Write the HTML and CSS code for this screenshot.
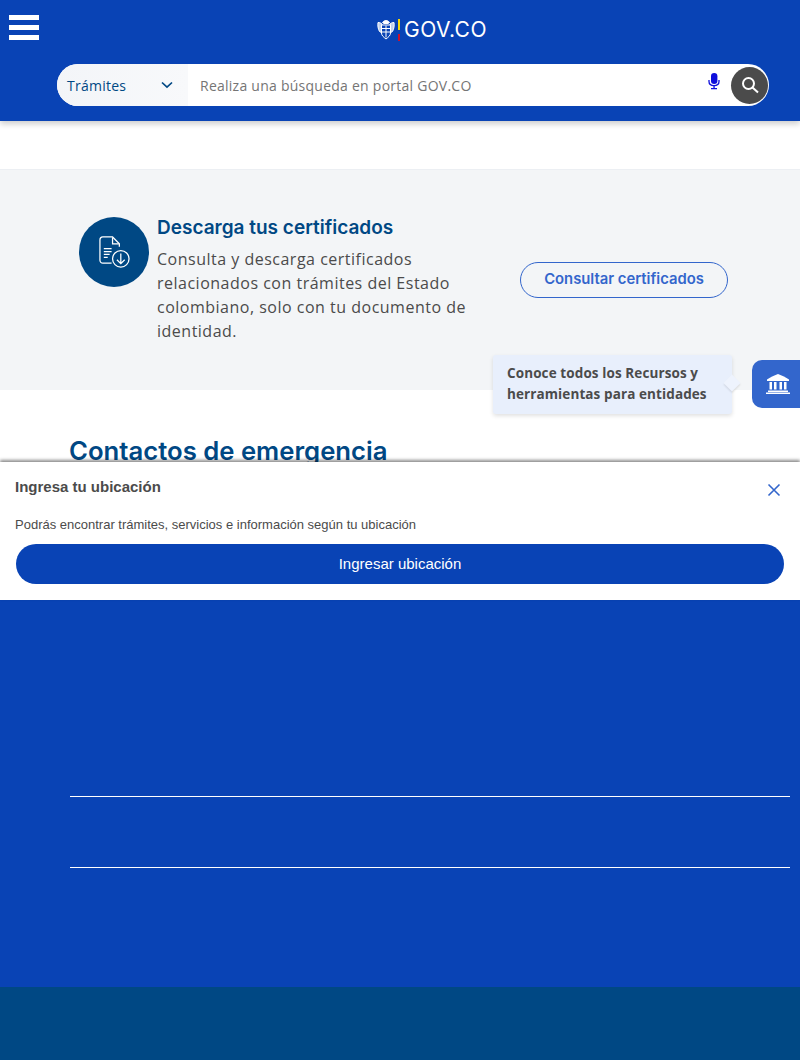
FILE: index.html
```html
<!DOCTYPE html>
<html lang="es">
<head>
  <meta charset="UTF-8">
  <title>Portal GOV.CO</title>
  <link rel="stylesheet" href="styles.css">
</head>
<body>

<!-- Header -->
<header class="header">
  <div class="header-top">
    <div class="burger"><span></span><span></span><span></span></div>
    <div class="logo">
      <svg class="crest" width="18" height="20" viewBox="0 0 18 20" fill="none" stroke="#fff" stroke-width="1">
        <path d="M5.500 2.500C6.500 1 8 .5 9 .5s2.500.5 3.500 2l-1.500 1H7z" fill="#fff"/>
        <path d="M1 2.500c1.500 0 3 .5 4 1.500v9l-2.500-1.500C1 9 .5 5 1 2.500zM17 2.500c-1.500 0-3 .5-4 1.500v9l2.500-1.500c1.500-2.500 2-6.500 1.500-9z" fill="#fff" fill-opacity=".75"/>
        <path d="M4.500 5h9v8c0 2.500-2 4-4.500 6-2.500-2-4.500-3.500-4.500-6z" fill="#0943b5"/>
        <path d="M5 8.500h8M5 12h8M9 5.500v12"/>
      </svg>
      <span class="flag"></span>
      <span class="logo-text">GOV.CO</span>
    </div>
  </div>
  <div class="search">
    <div class="search-type">
      <span>Trámites</span>
      <svg width="12" height="8" viewBox="0 0 12 8" fill="none" stroke="#004884" stroke-width="1.700"><path d="M1 1.500l5 4.700 5-4.700"/></svg>
    </div>
    <div class="search-input">Realiza una búsqueda en portal GOV.CO</div>
    <svg class="mic" width="12" height="17" viewBox="0 0 12 17" fill="#0f0fdc">
      <rect x="3" y="0" width="6.400" height="11" rx="3.200"/>
      <path d="M1 7v1.500C1 11 3 12.600 6 12.600s5-1.600 5-4.100V7" fill="none" stroke="#0f0fdc" stroke-width="1.300"/>
      <path d="M5.400 12h1.300v3.500H5.400zM3 15h6v1.300H3z"/>
    </svg>
    <div class="search-btn">
      <svg width="18" height="18" viewBox="0 0 18 18" fill="none" stroke="#fff" stroke-width="2"><circle cx="7.500" cy="7.500" r="5.500"/><path d="M11.500 11.500l5.500 5"/></svg>
    </div>
  </div>
</header>

<!-- Certificados -->
<section class="cert">
  <div class="cert-icon">
    <svg width="33" height="35" viewBox="0 0 34 34" fill="none" stroke="#fff" stroke-width="1.300">
      <path d="M14 28H5a3 3 0 0 1-3-3V4a3 3 0 0 1 3-3h10l7 7v3"/>
      <path d="M15 1.500V8h6.500"/>
      <path d="M6 13h8M6 16h8M6 19h6M6 22h4"/>
      <circle cx="23.500" cy="23.500" r="8.500"/>
      <path d="M23.500 18v10.500M19.500 24.500l4 4 4-4"/>
    </svg>
  </div>
  <div class="cert-text">
    <h3>Descarga tus certificados</h3>
    <p>Consulta y descarga certificados relacionados con trámites del Estado colombiano, solo con tu documento de identidad.</p>
  </div>
  <a class="cert-btn">Consultar certificados</a>
</section>

<!-- Contactos -->
<section class="contacts">
  <h2>Contactos de emergencia</h2>
</section>

<!-- Footer -->
<footer class="footer">
  <div class="footer-main">
    <hr class="line line-one">
    <hr class="line line-two">
  </div>
  <div class="footer-bottom"></div>
</footer>

<!-- Tooltip entidades -->
<div class="tip">Conoce todos los Recursos y herramientas para entidades</div>
<div class="side-tab">
  <svg width="24" height="20" viewBox="0 0 24 20" fill="#fff">
    <path d="M12 0C16 1.500 20 3.500 23 5.500V7H1V5.500C4 3.500 8 1.500 12 0z"/>
    <path d="M3.500 8h2.500v7.500H3.500zM8 8h2.500v7.500H8zM13.500 8H16v7.500h-2.500zM18 8h2.500v7.500H18z"/>
    <path d="M2 16.500h20V18H2zM0 18.500h24V20H0z"/>
  </svg>
</div>

<!-- Banner ubicacion -->
<div class="geo">
  <div class="geo-head">
    <strong>Ingresa tu ubicación</strong>
    <svg width="14" height="14" viewBox="0 0 14 14" fill="none" stroke="#3366cc" stroke-width="1.600"><path d="M1.500 1.500l11 11M12.500 1.500l-11 11"/></svg>
  </div>
  <p>Podrás encontrar trámites, servicios e información según tu ubicación</p>
  <button class="geo-btn">Ingresar ubicación</button>
</div>

</body>
</html>
```

FILE: styles.css
```css
* {
  box-sizing: border-box;
}
body {
  margin: 0;
  height: 1061px;
  overflow: hidden;
  font-family: "Open Sans", sans-serif;
  background: #fff;
  position: relative;
}

/* Header */
.header {
  height: 121px;
  background: #0943b5;
  box-shadow: 0 3px 6px rgba(0, 0, 0, 0.2);
  padding: 15px 31px 0 9px;
  position: relative;
}
.header-top {
  height: 49px;
  position: relative;
}
.burger {
  width: 30px;
  display: flex;
  flex-direction: column;
  gap: 5px;
}
.burger span {
  height: 5px;
  background: #fff;
}
.logo {
  position: absolute;
  left: 368px;
  top: 2px;
  display: flex;
  align-items: center;
}
.crest {
  margin-right: 3px;
}
.flag {
  width: 2px;
  height: 22px;
  margin-right: 4px;
  background: linear-gradient(#f5d90a 0 50%, #0943b5 50% 68%, #c8102e 68%);
}
.logo-text {
  font-family: Inter, sans-serif;
  font-size: 21px;
  font-weight: 400;
  letter-spacing: 0.5px;
  color: #fff;
}
.search {
  margin-left: 48px;
  height: 42px;
  background: #fff;
  border-radius: 21px;
  display: flex;
  align-items: center;
}
.search-type {
  width: 131px;
  height: 42px;
  padding: 0 15px 0 10px;
  border-radius: 21px 0 0 21px;
  background: linear-gradient(90deg, #f3f5f8, #f8f9fb);
  color: #004884;
  font-size: 14px;
  letter-spacing: 0.25px;
  display: flex;
  align-items: center;
  justify-content: space-between;
}
.search-input {
  flex: 1;
  padding-left: 12px;
  font-size: 14px;
  letter-spacing: 0.25px;
  color: #757575;
}
.mic {
  margin-right: 11px;
  margin-top: -8px;
}
.search-btn {
  width: 37px;
  height: 37px;
  margin-right: 1px;
  border-radius: 50%;
  background: #4b4b4b;
  display: flex;
  align-items: center;
  justify-content: center;
}

/* Certificados */
.cert {
  margin-top: 48px;
  height: 221px;
  background: #f3f5f7;
  border-top: 1px solid #eceff3;
  padding: 47px 72px 0 79px;
  display: flex;
  align-items: flex-start;
}
.cert-icon {
  flex: none;
  width: 70px;
  height: 70px;
  border-radius: 50%;
  background: #004884;
  margin-right: 8px;
  display: flex;
  align-items: center;
  justify-content: center;
}
.cert-text {
  width: 320px;
  margin-right: 43px;
  padding-top: 1px;
}
.cert-text h3 {
  margin: 0 0 9px;
  font-family: Inter, sans-serif;
  font-size: 19px;
  font-weight: 600;
  line-height: 20px;
  color: #004884;
}
.cert-text p {
  margin: 0;
  font-size: 16px;
  letter-spacing: 0.5px;
  line-height: 24px;
  color: #4b4b4b;
}
.cert-btn {
  flex: none;
  width: 208px;
  height: 36px;
  margin-top: 45px;
  padding-bottom: 3px;
  border: 1px solid #3366cc;
  border-radius: 18px;
  font-family: Inter, sans-serif;
  font-size: 14.800px;
  font-weight: 600;
  color: #3366cc;
  display: flex;
  align-items: center;
  justify-content: center;
}

/* Contactos */
.contacts {
  height: 210px;
  padding: 47px 0 0 69px;
}
.contacts h2 {
  margin: 0;
  font-family: Inter, sans-serif;
  font-size: 25.700px;
  font-weight: 600;
  line-height: 28px;
  color: #004884;
}

/* Footer */
.footer-main {
  height: 387px;
  background: #0943b5;
  padding: 196px 10px 0 70px;
}
.line {
  margin: 0;
  border: 0;
  height: 1px;
  background: #fff;
}
.line-two {
  margin-top: 70px;
}
.footer-bottom {
  height: 73px;
  background: #004884;
}

/* Tooltip */
.tip {
  position: absolute;
  left: 493px;
  top: 355px;
  width: 239px;
  height: 59px;
  padding: 8px 14px;
  background: #e8effc;
  border-radius: 3px;
  box-shadow: 0 2px 4px rgba(0, 0, 0, 0.12);
  font-size: 13.500px;
  font-weight: 700;
  letter-spacing: 0.1px;
  line-height: 21px;
  color: #4b4b4b;
}
.tip::after {
  content: "";
  position: absolute;
  right: -6px;
  top: 22px;
  width: 12px;
  height: 12px;
  background: #eef3fd;
  box-shadow: 1px 1px 2px rgba(0, 0, 0, 0.1);
  transform: rotate(45deg);
}
.side-tab {
  position: absolute;
  right: 0;
  top: 360px;
  width: 48px;
  height: 48px;
  padding-left: 4px;
  background: #3366cc;
  border-radius: 10px 0 0 10px;
  display: flex;
  align-items: center;
  justify-content: center;
}

/* Banner ubicacion */
.geo {
  position: absolute;
  left: 0;
  right: 0;
  top: 462px;
  height: 138px;
  background: #fff;
  box-shadow: 0 -2px 3px rgba(0, 0, 0, 0.45);
  padding: 16px 16px 0 15px;
  font-family: "Liberation Sans", Arial, sans-serif;
  color: #4b4b4b;
}
.geo-head {
  height: 17px;
  display: flex;
  justify-content: space-between;
  align-items: flex-start;
  padding-right: 3px;
  font-size: 15px;
  line-height: 17px;
}
.geo-head svg {
  margin-top: 5px;
}
.geo p {
  margin: 22px 0 12px;
  font-size: 13px;
  line-height: 15px;
}
.geo-btn {
  display: block;
  width: 768px;
  height: 40px;
  margin-left: 1px;
  padding-bottom: 3px;
  border: 0;
  border-radius: 20px;
  background: #0943b5;
  color: #fff;
  font-family: inherit;
  font-size: 15px;
}
```
